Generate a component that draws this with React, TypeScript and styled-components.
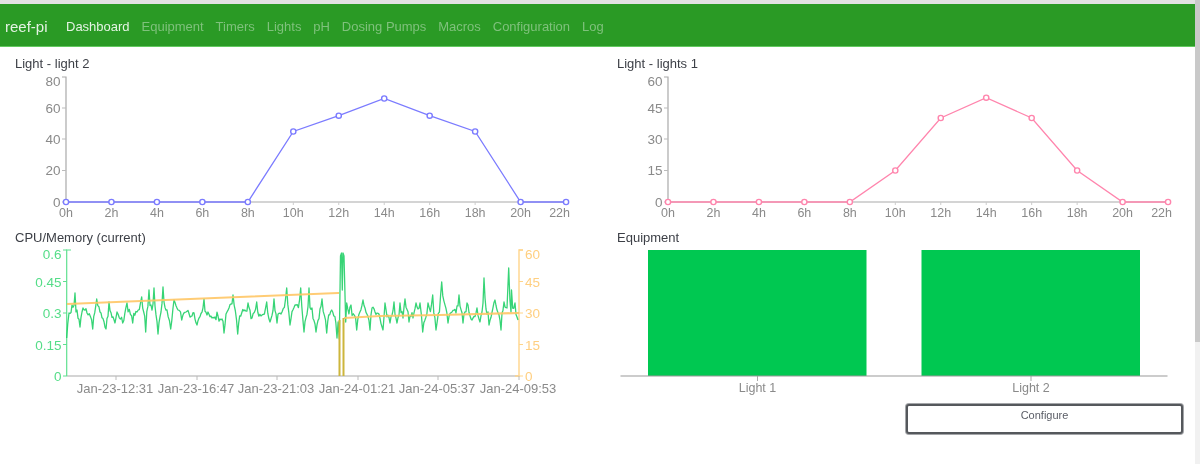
import React from 'react';
import styled, {createGlobalStyle} from "styled-components";

const navItems = ['Dashboard', 'Equipment', 'Timers', 'Lights', 'pH', 'Dosing Pumps', 'Macros', 'Configuration', 'Log']

const hours = ['0h', '2h', '4h', '6h', '8h', '10h', '12h', '14h', '16h', '18h', '20h', '22h']

// peaks and valleys of the cpu trace, read off the screenshot
const cpuTrace: number[][] = [
    [66.7, 338], [69, 313], [72, 305], [75, 293], [77, 310], [80, 327], [83, 308], [87, 313], [92.7, 329], [96.7, 299], [100, 312], [106, 329],
    [109, 302], [115, 323], [117, 312], [122.7, 323], [127, 303], [132.7, 323], [137, 312], [141.7, 297], [145.7, 332], [149, 290], [151, 305],
    [154, 288], [158, 334], [163, 287], [167, 310], [170.7, 329], [174, 300], [178, 310], [181.7, 320], [186, 312], [192, 316], [197, 325],
    [204, 299], [208, 312], [212, 318], [218, 316], [224, 333], [229, 308], [233, 295], [237.7, 334], [241.7, 313], [248, 303], [252, 318],
    [256.7, 302], [261, 316], [266.7, 302], [270, 322], [274, 299], [277, 323], [282, 312], [286.7, 288], [290, 325], [295, 305], [300.7, 288],
    [304, 332], [309, 288], [312, 308], [316, 332], [322, 299], [326.7, 333], [331.7, 310], [337, 338], [339.3, 339], [340.5, 256], [341.5, 253],
    [342.3, 290], [343, 253], [344, 256], [345.7, 322], [346.7, 303], [351, 305], [356.7, 330], [363, 300], [370, 330], [372, 308], [377, 313],
    [383, 330], [385, 303], [390, 323], [394, 302], [397, 323], [400, 303], [403, 318], [405, 299], [409, 322], [413, 318], [416, 303], [420, 303],
    [422.7, 332], [428, 303], [432.7, 295], [436, 330], [441.7, 282], [448, 323], [452, 312], [456, 313], [459, 295], [463, 323], [467, 303],
    [472, 320], [477, 308], [480, 322], [484, 278], [489, 325], [495, 300], [501, 330], [504, 302], [507, 308], [508.7, 268], [511, 312],
    [511.5, 290], [515, 303], [518, 320],
]

const wiggle = (i: number): number => Math.sin(i * 12.9898) * 43758.5453 % 1

const buildCpuPath = (): string => {
    const meanY = 314
    const points: string[] = []
    cpuTrace.forEach(([x, y], index) => {
        const next = cpuTrace[index + 1]
        points.push(x + ',' + y)
        if (!next) return
        const steps = Math.floor(next[0] - x)
        for (let s = 1; s < steps; s++) {
            const t = s / steps
            const straight = y + (next[1] - y) * t
            // stay near the mean between extremes, so the peaks come out spiky
            const pull = Math.sin(Math.PI * t) * 0.55
            const py = straight + (meanY - straight) * pull + wiggle(index * 31 + s) * 4.5
            points.push((x + (next[0] - x) * t).toFixed(1) + ',' + py.toFixed(1))
        }
    })
    return 'M' + points.join(' L')
}

interface LineChartProps {
    originX: number
    yTicks: { label: string, y: number }[]
    values: number[]
    color: string
}

const LineChart = ({originX, yTicks, values, color}: LineChartProps) => {
    const step = 45.46
    const points = values.map((y, i) => ({x: originX + i * step, y}))
    const endX = originX + 11 * step
    return (
        <ChartSvg width={593} height={158} viewBox={`${originX - 66} 71 593 158`}>
            <path d={`M${originX - 4} 77 H${originX} V202 H${endX}`} fill="none" stroke="#aaa" strokeWidth={1.2}/>
            {yTicks.map((tick) => (
                <g key={tick.label}>
                    {tick.label !== yTicks[0].label && <line x1={originX - 4} x2={originX} y1={tick.y} y2={tick.y} stroke="#bbb"/>}
                    <AxisText x={originX - 5.5} y={tick.label === yTicks[0].label ? 85.5 : tick.y + 4.5} textAnchor="end" fontSize={13.5}>{tick.label}</AxisText>
                </g>
            ))}
            {hours.map((hour, i) => {
                const x = originX + i * step
                return (
                    <g key={hour}>
                        <line x1={x} x2={x} y1={202} y2={205} stroke="#ccc"/>
                        <AxisText x={i === 11 ? x - 6.5 : x} y={217} textAnchor="middle" fontSize={12.5}>{hour}</AxisText>
                    </g>
                )
            })}
            <polyline points={points.map((p) => p.x + ',' + p.y).join(' ')} fill="none" stroke={color} strokeWidth={1.3}/>
            {points.map((p) => <circle key={p.x} cx={p.x} cy={p.y} r={2.6} fill="#fff" stroke={color} strokeWidth={1.4}/>)}
        </ChartSvg>
    )
}

const UsageChart = () => {
    const ticks = [0, 1, 2, 3, 4]
    const leftLabels = ['0', '0.15', '0.3', '0.45', '0.6']
    const rightLabels = ['0', '15', '30', '45', '60']
    const dates = [[116, 'Jan-23-12:31'], [197, 'Jan-23-16:47'], [277, 'Jan-23-21:03'], [358, 'Jan-24-01:21'], [438, 'Jan-24-05:37'], [519, 'Jan-24-09:53']]
    return (
        <ChartSvg width={593} height={155} viewBox="0 245 593 155">
            <path d="M67 376 H519" stroke="#aaa" strokeWidth={1.2} fill="none"/>
            <path d="M71 250 H66.7 V376" stroke="#5fe08f" strokeWidth={1.2} fill="none"/>
            <path d="M515 376 H519 V250 H523" stroke="#ffd58a" strokeWidth={1.4} fill="none"/>
            {ticks.map((i) => {
                const y = 376 - i * 31.5
                return (
                    <g key={i}>
                        <line x1={63} x2={67} y1={y} y2={y} stroke="#5fe08f"/>
                        <line x1={519} x2={523} y1={y} y2={y} stroke="#ffd58a"/>
                        <AxisText x={61.5} y={i === 4 ? 259 : y + 5} textAnchor="end" fontSize={13.5} fill="#55dd88">{leftLabels[i]}</AxisText>
                        <AxisText x={525} y={i === 4 ? 259 : y + 5} fontSize={13.5} fill="#ffcf80">{rightLabels[i]}</AxisText>
                    </g>
                )
            })}
            {dates.map(([x, label]) => (
                <g key={label}>
                    <line x1={x} x2={x} y1={376} y2={380} stroke="#bbb"/>
                    <AxisText x={Number(x) - 1} y={393} textAnchor="middle" fontSize={13}>{label}</AxisText>
                </g>
            ))}
            <path d={buildCpuPath()} stroke="#14cc5e" strokeWidth={1.3} strokeOpacity={0.85} strokeLinejoin="round" fill="none"/>
            <path d="M67 304 L338 293 L339 293 M344 318 L380 316 L440 315 L519 313" stroke="#ffc766" strokeWidth={2.2} strokeOpacity={0.9} fill="none"/>
            <path d="M339.5 320 V376 M343.5 318 V376" stroke="#cdb63c" strokeWidth={2} fill="none"/>
        </ChartSvg>
    )
}

const EquipmentChart = () => {
    const bars = [{x: 648, label: 'Light 1'}, {x: 921.5, label: 'Light 2'}]
    return (
        <ChartSvg width={593} height={155} viewBox="602 245 593 155">
            {bars.map((bar) => (
                <g key={bar.label}>
                    <rect x={bar.x} y={250} width={218.5} height={126} fill="#00c851"/>
                    <line x1={bar.x + 109.5} x2={bar.x + 109.5} y1={376} y2={381} stroke="#aaa"/>
                    <AxisText x={bar.x + 109.5} y={392} textAnchor="middle" fontSize={12.5}>{bar.label}</AxisText>
                </g>
            ))}
            <line x1={620.5} x2={1167.5} y1={376} y2={376} stroke="#999" strokeWidth={1.2}/>
        </ChartSvg>
    )
}

const App = () => {
    return (
        <Page>
            <GlobalStyle/>
            <Main>
                <Navbar>
                    <Brand>reef-pi</Brand>
                    <NavList>
                        {navItems.map((item, i) => <NavItem key={item} isActive={i === 0}>{item}</NavItem>)}
                    </NavList>
                </Navbar>
                <Dashboard>
                    <Panel>
                        <PanelTitle>Light - light 2</PanelTitle>
                        <LineChart originX={66} color="#7b7bff" values={[202, 202, 202, 202, 202, 131.5, 115.7, 98.5, 115.7, 131.5, 202, 202]}
                                   yTicks={[{label: '80', y: 77}, {label: '60', y: 108}, {label: '40', y: 139}, {label: '20', y: 170.5}, {label: '0', y: 202}]}/>
                    </Panel>
                    <Panel>
                        <PanelTitle>Light - lights 1</PanelTitle>
                        <LineChart originX={667.5} color="#ff85ad" values={[202, 202, 202, 202, 202, 170.5, 118, 97.7, 118, 170.5, 202, 202]}
                                   yTicks={[{label: '60', y: 77}, {label: '45', y: 108}, {label: '30', y: 139}, {label: '15', y: 170.5}, {label: '0', y: 202}]}/>
                    </Panel>
                    <Panel>
                        <PanelTitle>CPU/Memory (current)</PanelTitle>
                        <UsageChart/>
                    </Panel>
                    <Panel>
                        <PanelTitle>Equipment</PanelTitle>
                        <EquipmentChart/>
                        <ConfigureButton>Configure</ConfigureButton>
                    </Panel>
                </Dashboard>
            </Main>
            <ScrollTrack>
                <ScrollThumb/>
            </ScrollTrack>
        </Page>
    );
};

export default App;

const GlobalStyle = createGlobalStyle`
html, body {
    margin: 0;
    padding: 0;
    background: #fff;
    overflow: hidden;
    font-family: "Liberation Sans", Arial, sans-serif;
}
`

const Page = styled.div`
display: flex;
height: 464px;
width: 1200px;
overflow: hidden;
filter: blur(0.5px);
`

const Main = styled.div`
flex: 1;
min-width: 0;
`

const Navbar = styled.nav`
display: flex;
align-items: center;
box-sizing: border-box;
height: 47px;
padding: 2px 0 0 5px;
background-color: #2a9a25;
border-top: 4px solid #e2e2e2;
border-bottom: 1px solid #62c95f;
`

const Brand = styled.div`
width: 61px;
font-size: 15px;
color: #e4f2e3;
`

const NavList = styled.div`
display: flex;
gap: 11.9px;
`

const NavItem = styled.div<{ isActive: boolean }>`
font-size: 13px;
color: ${({isActive}) => isActive ? '#e4f3e3' : '#7fc17c'};
`

const Dashboard = styled.div`
display: grid;
grid-template-columns: 602px 593px;
grid-auto-rows: 174px;
padding-top: 8px;
`

const Panel = styled.div`
display: flex;
flex-direction: column;
`

const PanelTitle = styled.div`
height: 16px;
padding-left: 15px;
font-size: 13px;
line-height: 18px;
color: #3c3f46;
`

const ChartSvg = styled.svg`
display: block;
flex: none;
`

const AxisText = styled.text`
font-family: "Liberation Sans", Arial, sans-serif;
fill: ${({fill}) => fill || '#8a8a8a'};
`

const ConfigureButton = styled.button`
flex: none;
align-self: flex-end;
box-sizing: border-box;
width: 277px;
height: 30px;
margin: 4px 12px 0 0;
padding: 0 0 9px;
background: #fff;
border: 2px solid #55585c;
border-radius: 3px;
box-shadow: 0 0 0 1px #a4a6a9;
font-family: "Liberation Sans", Arial, sans-serif;
font-size: 11px;
color: #5a5d66;
`

const ScrollTrack = styled.div`
flex: none;
width: 5px;
background: #f1f1f1;
`

const ScrollThumb = styled.div`
height: 342px;
background: #c9c9c9;
`
